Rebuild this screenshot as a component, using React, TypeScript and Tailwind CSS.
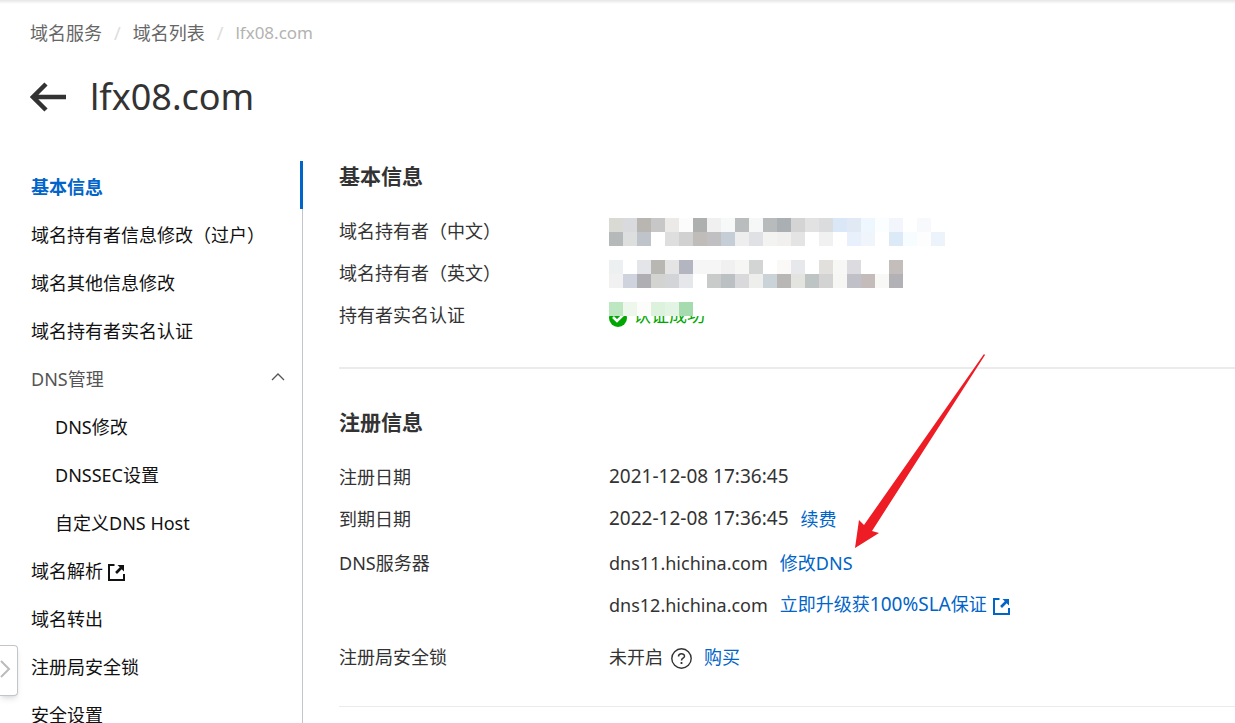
import type { ReactNode } from "react";

type NavItem = {
  label: string;
  active?: boolean;
  external?: boolean;
  children?: string[];
};

const navItems: NavItem[] = [
  { label: "基本信息", active: true },
  { label: "域名持有者信息修改（过户）" },
  { label: "域名其他信息修改" },
  { label: "域名持有者实名认证" },
  { label: "DNS管理", children: ["DNS修改", "DNSSEC设置", "自定义DNS Host"] },
  { label: "域名解析", external: true },
  { label: "域名转出" },
  { label: "注册局安全锁" },
  { label: "安全设置" },
];

const CELL = 14;

const ownerCn = [
  "dadad5 d9dadd b9b5b0 c7c7c7 eceae9 fcfcfc aeb0b0 f0f0f0 f7f9f9 b9bdbe f6f7f7 b8bbbb a9afb2 d4d4d4 e2e2e2 dbdcdd d9e7f7 e1e9f5 eff7fe fbfefe f2f5fb ffffff f7f9fd ffffff",
  "b5b9b9 dcdfde bec4ca ffffff dededf d1d1d2 c0bcba c0c0c3 c5cdd6 eeeeef e0e1e5 f3f3f1 f2f0ee e4e4e4 ffffff f1f1f1 ffffff e8f1fb f0f5fb ffffff dceaf7 f7fcfe fdfdfe ecf3fb",
];

const ownerEn = [
  "edf0f0 ffffff e3e5e9 b8b7b2 e4e4e4 b3b6c0 f6f6f6 f6f6f6 f0f0f1 f6f6f5 d3d5d4 ffffff faf9f7 e7e8eb ffffff e1e0dc f7f7f5 dcdce0 ffffff ffffff c3bdbc",
  "f1f1f1 cfd3dd aeaeb3 d3d3d2 d3d4d7 e5e7ea ffffff c9cbca bbc0c3 d9d9dc eeeeec cad3d7 b9b7b5 e3e3df bec4c4 d3d3d3 f6f7f4 bfc0c8 c3bcbb f8f8f6 b2b2b6",
];

const verified = ["bde7c1 edf7ec fcfdfb dcf2dd e3f3e4 a5dbae ffffff"];

const Mosaic = ({ rows, className }: { rows: string[]; className?: string }) => {
  const cells = rows.map((row) => row.split(" "));
  return (
    <svg
      width={cells[0].length * CELL}
      height={cells.length * CELL}
      shapeRendering="crispEdges"
      className={className}
      aria-hidden="true"
    >
      {cells.map((row, y) =>
        row.map((color, x) => (
          <rect
            key={`${x}-${y}`}
            x={x * CELL}
            y={y * CELL}
            width={CELL}
            height={CELL}
            fill={`#${color}`}
          />
        ))
      )}
    </svg>
  );
};

const ExternalIcon = ({ className }: { className?: string }) => (
  <svg width="17" height="17" viewBox="0 0 17 17" className={className} aria-hidden="true">
    <path
      d="M6.500 1H1v15h15v-6"
      fill="none"
      stroke="currentColor"
      strokeWidth="2"
    />
    <path
      d="M9.500 1h6.500v6.500l-2.300-2.300-4.700 4.700-1.900-1.900 4.700-4.700z"
      fill="currentColor"
    />
  </svg>
);

const Breadcrumb = () => (
  <nav className="flex gap-3 text-lg leading-6 text-[#666]" aria-label="breadcrumb">
    <a href="#services">域名服务</a>
    <span className="text-[#ddd]">/</span>
    <a href="#list">域名列表</a>
    <span className="text-[#ddd]">/</span>
    <span className="text-[17px] text-[#b3b3b3]">lfx08.com</span>
  </nav>
);

const SideNav = () => (
  <nav className="w-[303px] shrink-0 border-r border-[#c0c6cc] text-lg text-[#111]">
    <ul>
      {navItems.map((item) => (
        <li key={item.label}>
          {item.children ? (
            <button
              type="button"
              className="flex h-12 w-full items-center justify-between pt-1 pr-[17px] pl-[31px] text-[#555]"
            >
              {item.label}
              <svg
                width="14"
                height="14"
                viewBox="0 0 14 14"
                fill="none"
                stroke="#555"
                className="mb-1"
                aria-hidden="true"
              >
                <path d="M1 10l6-6 6 6" strokeWidth="1.300" />
              </svg>
            </button>
          ) : (
            <a
              href="#nav"
              className={
                item.active
                  ? "-mr-px flex h-12 items-center border-r-3 border-[#0064c8] pt-1 pl-[31px] font-bold text-[#0064c8]"
                  : "flex h-12 items-center gap-[5px] pt-1 pl-[31px]"
              }
            >
              {item.label}
              {item.external && <ExternalIcon className="mt-0.5" />}
            </a>
          )}
          {item.children && (
            <ul>
              {item.children.map((child) => (
                <li key={child}>
                  <a href="#nav" className="flex h-12 items-center pt-1 pl-[55px]">
                    {child}
                  </a>
                </li>
              ))}
            </ul>
          )}
        </li>
      ))}
    </ul>
  </nav>
);

const InfoRow = ({ label, children }: { label: string; children: ReactNode }) => (
  <div className="flex">
    <dt className="flex h-[42px] w-[270px] shrink-0 items-center">{label}</dt>
    <dd>{children}</dd>
  </div>
);

const Line = ({ children }: { children: ReactNode }) => (
  <div className="flex h-[42px] items-center gap-3">{children}</div>
);

const Action = ({ children }: { children: ReactNode }) => (
  <a href="#action" className="flex items-center gap-1.5 text-[#0064c8]">
    {children}
  </a>
);

const App = () => {
  return (
    <div className="relative h-screen overflow-hidden bg-white font-['Noto_Sans','Noto_Sans_CJK_SC',sans-serif] text-[#333]">
      <div className="h-1 bg-linear-to-b from-[#e6e6e6] to-white" />
      <header className="px-[30px] pt-[17px]">
        <Breadcrumb />
        <div className="mt-[25px] flex h-[54px] items-center gap-6">
          <button type="button" aria-label="返回">
            <svg width="36" height="30" viewBox="0 0 36 30" aria-hidden="true">
              <path
                d="M16 2L3 15l13 13M3 15h33"
                fill="none"
                stroke="#333"
                strokeWidth="4.500"
              />
            </svg>
          </button>
          <h1 className="text-4xl">lfx08.com</h1>
        </div>
      </header>

      <div className="mt-[37px] flex">
        <SideNav />
        <main className="min-w-0 grow pl-9 text-lg">
          <section className="border-b-2 border-[#ebebeb] pb-[31px]">
            <h2 className="text-[21px] leading-[30px] font-bold">基本信息</h2>
            <dl className="mt-[19px]">
              <InfoRow label="域名持有者（中文）">
                <Line>
                  <Mosaic rows={ownerCn} className="mt-0.5" />
                </Line>
              </InfoRow>
              <InfoRow label="域名持有者（英文）">
                <Line>
                  <Mosaic rows={ownerEn} className="mt-0.5" />
                </Line>
              </InfoRow>
              <InfoRow label="持有者实名认证">
                <div className="relative flex h-[42px] items-center gap-1.5 text-[#00a700]">
                  <svg width="18" height="18" viewBox="0 0 18 18" className="mt-1.5" aria-hidden="true">
                    <circle cx="9" cy="9" r="9" fill="currentColor" />
                    <path d="M4 8l4 4 6-6" fill="none" stroke="#fff" strokeWidth="2.500" />
                  </svg>
                  认证成功
                  <Mosaic rows={verified} className="absolute top-2 left-0" />
                </div>
              </InfoRow>
            </dl>
          </section>

          <section className="border-b border-[#ebebeb] pt-[38px] pb-[28px]">
            <h2 className="text-[21px] leading-[30px] font-bold">注册信息</h2>
            <dl className="mt-[19px]">
              <InfoRow label="注册日期">
                <Line>
                  <span className="text-[19px]">2021-12-08 17:36:45</span>
                </Line>
              </InfoRow>
              <InfoRow label="到期日期">
                <Line>
                  <span className="text-[19px]">2022-12-08 17:36:45</span>
                  <Action>续费</Action>
                </Line>
              </InfoRow>
              <div className="pt-0.5 pb-2.5">
                <InfoRow label="DNS服务器">
                  <Line>
                    dns11.hichina.com <Action>修改DNS</Action>
                  </Line>
                  <Line>
                    dns12.hichina.com
                    <Action>
                      <span>
                        立即升级获<span className="text-[19px]">100%SLA</span>保证
                      </span>
                      <ExternalIcon className="mt-1" />
                    </Action>
                  </Line>
                </InfoRow>
              </div>
              <InfoRow label="注册局安全锁">
                <Line>
                  <span className="flex items-center gap-2">
                    未开启
                    <svg
                      width="21"
                      height="21"
                      viewBox="0 0 21 21"
                      fill="none"
                      stroke="#333"
                      className="mt-0.5"
                      aria-hidden="true"
                    >
                      <circle cx="10.500" cy="10.500" r="9.700" strokeWidth="1.400" />
                      <path d="M7.500 8.500c0-3.700 6-3.700 6-.300 0 2-3 2-3 4.200" strokeWidth="1.500" />
                      <path d="M10.500 14v2" strokeWidth="1.800" />
                    </svg>
                  </span>
                  <Action>购买</Action>
                </Line>
              </InfoRow>
            </dl>
          </section>
        </main>
      </div>

      <button
        type="button"
        aria-label="展开"
        className="absolute top-[645px] left-0 flex h-[51px] w-[18px] items-center rounded-r-sm border border-l-0 border-[#c0c6cc] bg-white shadow-md"
      >
        <svg
          width="12"
          height="18"
          viewBox="0 0 12 18"
          fill="none"
          stroke="#bbb"
          className="mb-1"
          aria-hidden="true"
        >
          <path d="M1 1l8 8-8 8" strokeWidth="2" />
        </svg>
      </button>

      <svg
        width="130"
        height="194"
        viewBox="855 354 130 194"
        className="absolute top-[354px] left-[855px]"
        aria-hidden="true"
      >
        <path d="M855 548l4-28 5 5L984 354l1 1-113 176 7 2z" fill="#ee1c25" />
      </svg>
    </div>
  );
};

export default App;
